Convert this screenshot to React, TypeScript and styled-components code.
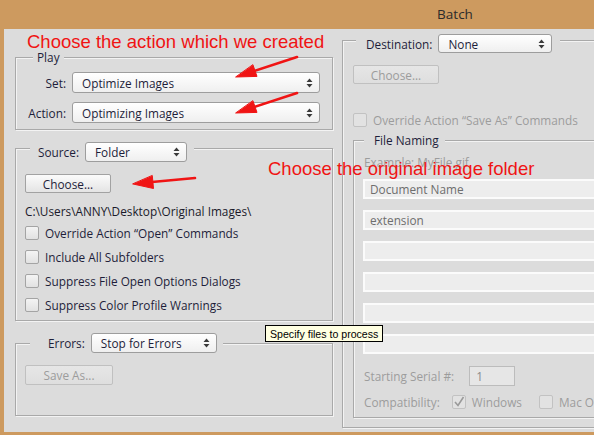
import React from 'react'
import styled, {createGlobalStyle} from 'styled-components'

const ink = '#1e1e3a'
const dim = '#9c9c9c'
const face = '#dcdcdc'

const GlobalStyle = createGlobalStyle`
	html, body {
		margin: 0;
		padding: 0;
		background: ${face};
	}
	body {
		width: 594px;
		height: 435px;
		overflow: hidden;
		font-family: 'Open Sans', 'Noto Sans', sans-serif;
		font-size: 11.8px;
		line-height: 14px;
		color: ${ink};
	}
`

const UpDown = () => (
	<svg width="7" height="10" viewBox="0 0 7 10">
		<path d="M3.5 0.5 L6.5 4 L0.5 4 Z M3.5 9.5 L6.5 6 L0.5 6 Z" fill="#3a3a3a" />
	</svg>
)

const Tick = () => (
	<svg width="14" height="14" viewBox="0 0 14 14">
		<polyline points="3,7 6,10.5 11.5,2" fill="none" stroke="#9a9a9a" strokeWidth="1.6" />
	</svg>
)

const Select = (props: {value: string, width?: number, height?: number}) => (
	<SelectBox $w={props.width} $h={props.height}>
		<span>{props.value}</span>
		<UpDown />
	</SelectBox>
)

const Check = (props: {label: string, disabled?: boolean, checked?: boolean}) => (
	<CheckRow $disabled={props.disabled}>
		<Box $disabled={props.disabled}>{props.checked && <Tick />}</Box>
		<span>{props.label}</span>
	</CheckRow>
)

// hand drawn red arrows on top of the dialog
const Arrows = () => (
	<ArrowLayer width="594" height="435" viewBox="0 0 594 435">
		<g stroke="#f01414" strokeWidth="2.6" strokeLinecap="round" fill="#f01414">
			<line x1="297" y1="57" x2="254" y2="71" />
			<path d="M236 77 L257 76.4 L253 65 Z" strokeWidth="1" />
			<line x1="297" y1="93" x2="254" y2="107" />
			<path d="M236 113 L257 112.4 L253 101 Z" strokeWidth="1" />
			<line x1="195" y1="178" x2="152" y2="182" />
			<path d="M133 184 L153.5 188.5 L152.3 175.8 Z" strokeWidth="1" />
		</g>
	</ArrowLayer>
)

const App: React.FC = () => {
	const namingFields = ['Document Name', 'extension', '', '', '', '']
	return (
		<>
			<GlobalStyle />
			<Window>
				<TitleBar>Batch</TitleBar>
				<Body>
					<LeftCol>
						<Group $pad="0 12px 6px 6px">
							<Header $lift={8} $indent={11} $pad="0 4px">Play</Header>
							<Fields>
								<Label>Set:</Label>
								<Select value="Optimize Images" height={21} />
								<Label>Action:</Label>
								<Select value="Optimizing Images" height={21} />
							</Fields>
						</Group>

						<Group $mt={18} $pad="0 12px 8px 9px">
							<Header $lift={7} $indent={5} $pad="0 7px 0 8px">
								<span>Source:</span>
								<Select value="Folder" width={102} />
							</Header>
							<PushButton $w={86} $mt={12}>Choose...</PushButton>
							<PathText>C:\Users\ANNY\Desktop\Original Images\</PathText>
							<CheckList>
								<Check label="Override Action “Open” Commands" />
								<Check label="Include All Subfolders" />
								<Check label="Suppress File Open Options Dialogs" />
								<Check label="Suppress Color Profile Warnings" />
							</CheckList>
						</Group>

						<Group $mt={22} $pad="0 12px 30px 9px">
							<Header $lift={11} $indent={5} $pad="0 6px 0 18px">
								<span>Errors:</span>
								<Select value="Stop for Errors" width={126} />
							</Header>
							<PushButton $w={88} $h={20} $mt={12} disabled>Save As...</PushButton>
						</Group>
					</LeftCol>

					<RightCol>
						<Group $pad="0 10px 9px 10px">
							<Header $lift={7} $indent={3} $pad="0 8px 0 10px">
								<span>Destination:</span>
								<Select value="None" width={114} height={19} />
							</Header>
							<PushButton $w={86} $mt={12} disabled>Choose...</PushButton>
							<Spacer $h={29} />
							<Check label="Override Action “Save As” Commands" disabled />

							<Group $mt={13} $pad="0 10px 8px 9px">
								<Header $lift={8} $indent={1} $pad="0 6px 0 10px">File Naming</Header>
								<Hint>Example: MyFile.gif</Hint>
								<NameFields>
									{namingFields.map((v, i) => <NameField key={i}>{v}</NameField>)}
								</NameFields>
								<SerialRow>
									<span>Starting Serial #:</span>
									<SerialInput>1</SerialInput>
								</SerialRow>
								<CompatRow>
									<span>Compatibility:</span>
									<Check label="Windows" disabled checked />
									<Check label="Mac OS" disabled />
								</CompatRow>
							</Group>
						</Group>
					</RightCol>
				</Body>

				<RedNote $x={27} $y={33}>Choose the action which we created</RedNote>
				<RedNote $x={268} $y={160}>Choose the original image folder</RedNote>
				<Arrows />
				<Tooltip>Specify files to process</Tooltip>
			</Window>
		</>
	)
}

export default App

const Window = styled.div`
	position: relative;
	width: 910px;
	height: 435px;
	display: flex;
	flex-direction: column;
	background: #cd9a5f;
`
const TitleBar = styled.div`
	height: 28px;
	flex: none;
	display: flex;
	align-items: center;
	justify-content: center;
	padding-bottom: 1px;
	font-size: 13.5px;
	color: #2b2b2b;
`
const Body = styled.div`
	flex: 1;
	margin: 0 4px 3px;
	padding: 0 11px;
	background: ${face};
	display: grid;
	grid-template-columns: 318px 1fr;
	column-gap: 9px;
	align-items: start;
`
const LeftCol = styled.div`
	display: flex;
	flex-direction: column;
	padding-top: 28px;
`
const RightCol = styled.div`
	display: flex;
	flex-direction: column;
	padding-top: 11px;
`
const Group = styled.div<{$mt?: number, $pad: string}>`
	display: flex;
	flex-direction: column;
	align-items: flex-start;
	align-self: stretch;
	margin-top: ${p => p.$mt || 0}px;
	padding: ${p => p.$pad};
	border: 1px solid #a9a9a9;
	box-shadow: inset 1px 1px 0 #f3f3f3, 1px 1px 0 #f3f3f3;
`
const Header = styled.div<{$lift: number, $indent: number, $pad: string}>`
	display: flex;
	align-items: center;
	gap: 6px;
	margin-top: -${p => p.$lift}px;
	margin-left: ${p => p.$indent}px;
	padding: ${p => p.$pad};
	background: ${face};
	color: ${ink};
	line-height: 14px;
`
const Fields = styled.div`
	align-self: stretch;
	margin-top: 8px;
	display: grid;
	grid-template-columns: 44px 1fr;
	column-gap: 6px;
	row-gap: 9px;
	align-items: center;
`
const Label = styled.span`
	text-align: right;
`
const SelectBox = styled.div<{$w?: number, $h?: number}>`
	box-sizing: border-box;
	width: ${p => p.$w ? p.$w + 'px' : 'auto'};
	height: ${p => p.$h || 20}px;
	display: flex;
	align-items: center;
	justify-content: space-between;
	padding: 0 6px 0 9px;
	border: 1px solid #9d9d9d;
	border-radius: 3px;
	background: linear-gradient(#ffffff, #efefef);
	color: ${ink};
`
const PushButton = styled.button<{$w: number, $h?: number, $mt?: number}>`
	box-sizing: border-box;
	width: ${p => p.$w}px;
	height: ${p => p.$h || 19}px;
	margin-top: ${p => p.$mt || 0}px;
	padding: 0;
	font: inherit;
	color: ${ink};
	border: 1px solid #a2a2a2;
	border-radius: 2px;
	background: linear-gradient(#fbfbfb, #e4e4e4);
	&:disabled {
		color: ${dim};
		border-color: #c0c0c0;
		background: linear-gradient(#e6e6e6, #dedede);
	}
`
const PathText = styled.div`
	margin-top: 11px;
	color: #1a1a2a;
`
const CheckList = styled.div`
	display: flex;
	flex-direction: column;
	gap: 10px;
	margin-top: 8px;
`
const CheckRow = styled.div<{$disabled?: boolean}>`
	display: flex;
	align-items: center;
	gap: 6px;
	height: 14px;
	color: ${p => p.$disabled ? dim : ink};
`
const Box = styled.div<{$disabled?: boolean}>`
	box-sizing: border-box;
	width: 14px;
	height: 14px;
	display: flex;
	border: 1px solid ${p => p.$disabled ? '#c2c2c2' : '#a4a4a4'};
	border-radius: 2px;
	background: ${p => p.$disabled ? '#e2e2e2' : 'linear-gradient(#f4f4f4, #e2e2e2)'};
	svg { margin: -1px; }
`
const Spacer = styled.div<{$h: number}>`
	height: ${p => p.$h}px;
`
const Hint = styled.div`
	margin-top: 8px;
	margin-left: 1px;
	color: ${dim};
`
const NameFields = styled.div`
	align-self: stretch;
	display: flex;
	flex-direction: column;
	gap: 11px;
	margin-top: 10px;
`
const NameField = styled.div`
	box-sizing: border-box;
	height: 20px;
	padding: 0 5px;
	display: flex;
	align-items: center;
	border: 2px solid #fbfbfb;
	background: #ededed;
	color: #6e6e6e;
`
const SerialRow = styled.div`
	display: flex;
	align-items: center;
	gap: 15px;
	margin-top: 12px;
	margin-left: 1px;
	color: ${dim};
`
const SerialInput = styled.div`
	box-sizing: border-box;
	width: 46px;
	height: 20px;
	padding: 0 6px;
	display: flex;
	align-items: center;
	border: 1px solid #bcbcbc;
	background: #e6e6e6;
	color: #8a8a8a;
`
const CompatRow = styled.div`
	display: flex;
	align-items: center;
	gap: 12px;
	margin-top: 9px;
	margin-left: 1px;
	color: ${dim};
	& > div + div { margin-left: 5px; }
`
const RedNote = styled.div<{$x: number, $y: number}>`
	position: absolute;
	left: ${p => p.$x}px;
	top: ${p => p.$y}px;
	font-family: 'Liberation Sans', Arial, sans-serif;
	font-size: 18.5px;
	line-height: 1;
	color: #f01414;
	white-space: nowrap;
	pointer-events: none;
`
const ArrowLayer = styled.svg`
	position: absolute;
	left: 0;
	top: 0;
	pointer-events: none;
`
const Tooltip = styled.div`
	position: absolute;
	left: 265px;
	top: 325px;
	box-sizing: border-box;
	width: 118px;
	height: 17px;
	padding: 0 4px;
	display: flex;
	align-items: center;
	border: 1px solid #000;
	background: #ffffe1;
	font-family: 'Liberation Sans', Arial, sans-serif;
	font-size: 10.6px;
	color: #000;
	white-space: nowrap;
`
